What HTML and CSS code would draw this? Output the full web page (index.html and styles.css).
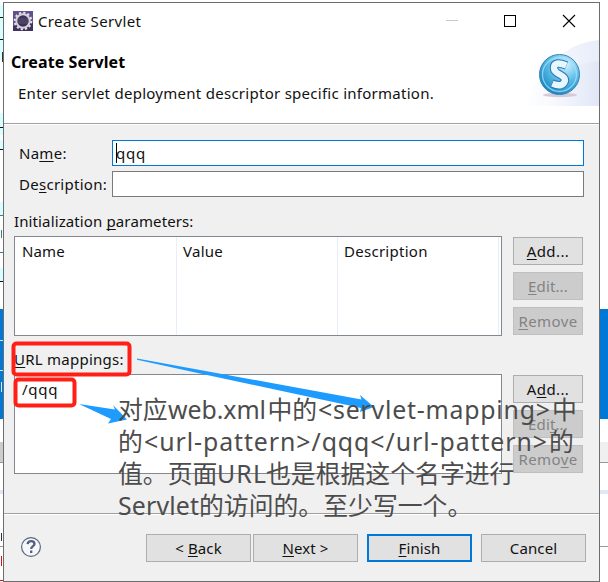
FILE: index.html
```html
<!DOCTYPE html>
<html lang="en">
<head>
<meta charset="utf-8">
<title>Create Servlet</title>
<link rel="stylesheet" href="styles.css">
</head>
<body>
<div class="desktop">
  <svg class="edge" width="3" height="582" viewBox="0 0 3 582" shape-rendering="crispEdges">
    <path fill="#d8ffff" d="M0 5h3v55H0zM0 113h3v22H0zM0 140h3v10H0zM0 202h3v13H0zM0 268h3v13H0z"/>
    <path stroke="#111" d="M0 17.5h3M0 39.5h3M0 127.5h3M0 149.5h3M0 281.5h3"/>
    <path stroke="#3f7f7f" d="M0 215.5h3M1.5 230v8M0 252.5h3"/>
    <path stroke="#333" d="M2.5 52v10"/>
    <path fill="#0078d7" d="M0 309h3v110H0z"/>
    <path stroke="#cde8ff" d="M0 340.5h3M0 370.5h3M1.5 382v10"/>
    <path fill="#ccc" d="M0 442h3v20H0z"/>
    <path stroke="#999" d="M0 462.5h3M0 546.5h3"/>
    <path fill="#e0e6f8" d="M0 490h3v4H0z"/>
    <path stroke="#234" d="M1.5 533v8"/>
    <path stroke="#e01010" d="M1.5 556v10M0 580.5h3"/>
  </svg>
  <main class="dialog">
    <div class="titlebar">
      <svg class="app" width="20" height="20" viewBox="0 0 20 20">
        <rect width="20" height="20" fill="#64508c"/><path fill="#40315f" d="M0 15l20-4v9H0z"/>
        <circle cx="10" cy="10" r="8.3" fill="none" stroke="#e6e3e8" stroke-width="2" stroke-dasharray="2.2 2.14"/>
        <circle cx="10" cy="10" r="6.7" fill="#3c3158" stroke="#d6d3d9" stroke-width="2"/>
        <path d="M5 8h10M4.5 10h11M5 12h10" stroke="#716386" stroke-width=".7"/>
      </svg>
      <span class="t title">Create Servlet</span>
      <svg class="controls" width="130" height="14" viewBox="0 0 130 14" shape-rendering="crispEdges">
        <path d="M0 6.5h12" stroke="#c8c8c8"/><rect x="58.5" y="1.5" width="11" height="11" fill="none" stroke="#000"/>
        <path d="M117 1l12 12M129 1l-12 12" stroke="#000" stroke-width="1.1" shape-rendering="auto"/>
      </svg>
    </div>
    <header class="banner">
      <div>
        <h1>Create Servlet</h1>
        <p>Enter servlet deployment descriptor specific information.</p>
      </div>
      <svg class="logo" width="75" height="68" viewBox="0 0 75 68">
        <defs>
          <linearGradient id="wash"><stop offset="0" stop-color="#fff"/><stop offset="1" stop-color="#dce3f6"/></linearGradient>
          <radialGradient id="ball" cx=".65" cy=".25" r=".85"><stop offset="0" stop-color="#d5f3ff"/><stop offset=".45" stop-color="#62c0ea"/><stop offset="1" stop-color="#087dbc"/></radialGradient>
        </defs>
        <path d="M0 67Q27 5 75 1V67z" fill="url(#wash)" opacity=".65"/>
        <path d="M18 67Q34 25 75 22V67z" fill="url(#wash)" opacity=".6"/>
        <ellipse cx="36" cy="56" rx="17" ry="2.2" fill="#d8c9d8"/>
        <circle cx="35.500" cy="35.500" r="20" fill="url(#ball)" stroke="#3685b5"/>
        <circle cx="35.500" cy="35.500" r="17" fill="none" stroke="#a4e2f8" stroke-width="1.3" opacity=".75"/>
        <path d="M42.500 26.500Q30 21.500 30 29C30 36 41.500 35 41 41.500Q39 49 28 44.500" fill="none" stroke="#3376b0" stroke-width="8.5"/>
        <path d="M42.300 26.500Q30 21.500 30 29C30 36 41.500 35 41 41.500Q39 49 28.400 44.600" fill="none" stroke="#e5f8ff" stroke-width="6.4"/>
      </svg>
    </header>
    <section class="content">
      <div class="fields">
        <label class="t name">Na<u>m</u>e:</label><div class="input focused"><span class="caret"></span><span class="t q">qqq</span></div>
        <label class="t desc">De<u>s</u>cription:</label><div class="input"></div>
      </div>
      <div class="label t init">Initialization <u>p</u>arameters:</div>
      <div class="row">
        <div class="list columns"><span class="t">Name</span><span class="t value">Value</span><span class="t cdesc">Description</span></div>
        <div class="actions"><div class="btn"><span class="add"><u>A</u>dd...</span></div><div class="btn off"><span class="edit"><u>E</u>dit...</span></div><div class="btn off"><span class="remove"><u>R</u>emove</span></div></div>
      </div>
      <div class="label t url"><u>U</u>RL mappings:</div>
      <div class="row">
        <div class="list mappings"><span class="t path">/qqq</span></div>
        <div class="actions"><div class="btn"><span class="add">A<u>d</u>d...</span></div><div class="btn off"><span class="edit">Edi<u>t</u>...</span></div><div class="btn off"><span class="remove">Remo<u>v</u>e</span></div></div>
      </div>
    </section>
    <footer>
      <svg class="help" width="22" height="22" viewBox="0 0 22 22"><circle cx="11" cy="11" r="9.400" fill="#f5f7fa" stroke="#59677e" stroke-width="1.200"/><path d="M7.600 8.200Q8 5.200 11.200 5.200Q14.500 5.200 14.500 8C14.500 10.200 11.200 10.200 11.200 13M11.200 14.500v2.400" fill="none" stroke="#52617b" stroke-width="2.300"/></svg>
      <div class="btn"><span class="back">&lt; <u>B</u>ack</span></div>
      <div class="btn next"><span class="nextt"><u>N</u>ext &gt;</span></div>
      <div class="btn primary"><span class="fin"><u>F</u>inish</span></div>
      <div class="btn"><span class="cancel">Cancel</span></div>
    </footer>
  </main>
  <svg class="edge" width="8" height="582" viewBox="0 0 8 582" shape-rendering="crispEdges">
    <path fill="#0078d7" d="M0 309h8v110H0z"/><path fill="#f0f0f0" d="M0 442h8v20H0z"/>
    <path stroke="#999" d="M0 462.500h8M0 546.500h8"/><path fill="#e0e6f8" d="M0 490h8v4H0z"/>
  </svg>
  <svg class="notes" width="608" height="582" viewBox="0 0 608 582">
    <g fill="none" stroke="#ff1f17" stroke-width="4"><rect x="13.500" y="343.500" width="116" height="31" rx="3"/><rect x="15.500" y="379.500" width="59" height="26" rx="3"/></g>
    <g fill="#1e9bff"><path d="M137 358.500L200 370L361.500 399.500L360 395L374 407L360 412L361 408L200 373.500L137 359.800Z"/><path d="M79 404L115 409.500L113 405L127 419.500L108 423.500L111 419Z"/></g>
    <g class="note-text">
      <text x="118" y="419">对应</text><text x="168" y="419" textLength="98">web.xml</text><text x="267.500" y="419">中的</text><text x="318" y="419" textLength="232">&lt;servlet-mapping&gt;</text><text x="552" y="419">中</text>
      <text x="118" y="451">的</text><text x="144" y="451" textLength="403">&lt;url-pattern&gt;/qqq&lt;/url-pattern&gt;</text><text x="549" y="451">的</text>
      <text x="118" y="483">值。页面</text><text x="217" y="483" textLength="49">URL</text><text x="266" y="483">也是根据这个名字进行</text>
      <text x="118" y="515" textLength="81">Servlet</text><text x="199" y="515">的访问的。至少写一个。</text>
    </g>
  </svg>
</div>
</body>
</html>
```
FILE: styles.css
```css
* { box-sizing: border-box; }
body { margin: 0; background: #fff; font: 15px/22px "Noto Sans", "Open Sans", sans-serif; color: #111; }
.desktop { position: relative; display: grid; grid-template-columns: 3px 597px 8px; width: 608px; height: 582px; overflow: hidden; }
.edge { display: block; }
.dialog { margin-top: 2px; height: 580px; border: 1px solid #6d6d6d; background: #f0f0f0; display: flex; flex-direction: column; }
.t, .btn span { white-space: nowrap; letter-spacing: .12px; }
u { text-decoration-thickness: 1px; text-underline-offset: 2px; text-decoration-skip-ink: none; }
.titlebar { height: 36px; background: #fff; display: flex; align-items: center; padding: 0 23px 0 9px; }
.app { margin-top: -1px; }
.titlebar .title { margin-left: 5px; letter-spacing: .36px; }
.controls { margin-left: auto; }
.banner { height: 85px; background: #fff; border-bottom: 1px solid #a0a0a0; display: flex; justify-content: space-between; }
.banner h1 { margin: 12px 0 0 7px; font-size: 16px; line-height: 22px; font-weight: 700; letter-spacing: .1px; color: #000; }
.banner p { margin: 9px 0 0 14px; white-space: nowrap; letter-spacing: .27px; }
.content { height: 389px; border-top: 1px solid #fff; padding: 15px 15px 0 10px; }
.fields { display: grid; grid-template-columns: 93px 472px; grid-template-rows: 26px 26px; row-gap: 5px; align-items: center; margin-left: 5px; }
.fields .name, .fields .desc { letter-spacing: .27px; }
.input { height: 26px; border: 1px solid #7a7a7a; background: #fff; display: flex; align-items: center; padding-left: 3px; }
.input .q, .mappings .path { letter-spacing: .75px; }
.focused { border-color: #0078d7; }
.caret { width: 1px; height: 20px; background: #000; margin-right: -1px; }
.label { height: 22px; }
.init { margin: 13px 0 4px; }
.url { margin: 12px 0 4px; }
.content .url { letter-spacing: .25px; }
.row { display: flex; gap: 11px; }
.list { width: 488px; height: 100px; border: 1px solid #828790; background: #fff; }
.columns { display: grid; grid-template-columns: 162px 161px 161px; background: #fff; }
.columns span { padding: 3px 0 0 7px; border-right: 1px solid #e8eef8; }
.columns .value, .columns .cdesc { padding-left: 6px; letter-spacing: .27px; }
.mappings { padding: 3px 7px; }
.actions { display: grid; grid-template-rows: repeat(3, 28px); row-gap: 7px; padding-top: 1px; }
.btn { width: 70px; height: 28px; border: 1px solid #adadad; background: #e1e1e1; display: flex; justify-content: center; align-items: center; }
.off { border-color: #bfbfbf; background: #ccc; color: #838383; }
.btn .add, .btn .remove { letter-spacing: .4px; }
footer { flex: 1; border-top: 1px solid #a0a0a0; box-shadow: inset 0 1px #fff; display: flex; align-items: flex-start; padding: 20px 0 0 16px; }
.help { margin: 2px 104px 0 0; flex: none; }
footer .btn { width: 105px; flex: none; }
.next { margin: 0 9px 0 2px; }
.primary { margin-right: 9px; border: 2px solid #0078d7; }
.notes { position: absolute; left: 0; top: 0; pointer-events: none; }
.note-text { font: 24.85px "Noto Sans", "Noto Sans CJK SC", sans-serif; fill: #4c4c4c; }
```
